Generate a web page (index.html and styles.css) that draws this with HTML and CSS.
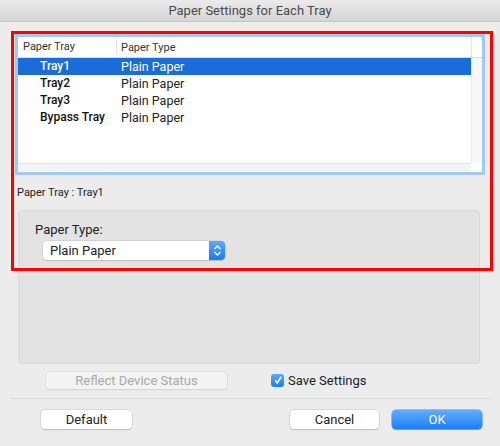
FILE: index.html
```html
<!DOCTYPE html>
<html lang="en">

<head>
    <meta charset="UTF-8">
    <meta name="viewport" content="width=device-width, initial-scale=1.0">
    <title>Paper Settings for Each Tray</title>

    <link rel="stylesheet" href="styles.css">
</head>

<body>
    <div class="window">
        <div class="titlebar">Paper Settings for Each Tray</div>

        <div class="content">
            <!-- tray list -->
            <div class="list">
                <div class="list-head">
                    <div class="col-tray">Paper Tray</div>
                    <div class="col-type">Paper Type</div>
                    <div class="col-end"></div>
                </div>
                <div class="list-body">
                    <ul class="rows">
                        <li class="active"><span class="col-tray">Tray1</span><span class="col-type">Plain Paper</span></li>
                        <li><span class="col-tray">Tray2</span><span class="col-type">Plain Paper</span></li>
                        <li><span class="col-tray">Tray3</span><span class="col-type">Plain Paper</span></li>
                        <li><span class="col-tray">Bypass Tray</span><span class="col-type">Plain Paper</span></li>
                    </ul>
                    <div class="vtrack"></div>
                </div>
                <div class="hscroll">
                    <div class="htrack"></div>
                    <div class="corner"></div>
                </div>
            </div>

            <div class="current">Paper Tray : Tray1</div>

            <div class="group">
                <div class="group-label">Paper Type:</div>
                <div class="popup">
                    <span class="popup-text">Plain Paper</span>
                    <span class="popup-arrows">
                        <svg width="9" height="13" viewBox="0 0 9 13">
                            <path d="M1.5 5 L4.5 2 L7.5 5 M1.5 8 L4.5 11 L7.5 8" fill="none" stroke="#fff" stroke-width="1.4" />
                        </svg>
                    </span>
                </div>
            </div>

            <div class="options">
                <button class="btn btn-disabled reflect">Reflect Device Status</button>
                <label class="check">
                    <span class="box">
                        <svg width="10" height="10" viewBox="0 0 10 10">
                            <path d="M2 5.2 L4.2 7.8 L8.2 1.8" fill="none" stroke="#fff" stroke-width="1.6" />
                        </svg>
                    </span>
                    Save Settings
                </label>
            </div>

            <div class="sep"></div>

            <div class="footer">
                <button class="btn default">Default</button>
                <button class="btn cancel">Cancel</button>
                <button class="btn btn-primary ok">OK</button>
            </div>
        </div>

        <!-- highlight frame over the list area -->
        <div class="mark"></div>
    </div>
</body>

</html>
```

FILE: styles.css
```css
* {
    margin: 0;
    padding: 0;
    box-sizing: border-box;
    list-style: none;
}

body {
    width: 500px;
    height: 446px;
    background: #ececec;
    font-family: Roboto, "Liberation Sans", sans-serif;
    color: #222;
    overflow: hidden;
}

.window {
    position: relative;
    height: 446px;
    display: flex;
    flex-direction: column;
}

.titlebar {
    height: 22px;
    line-height: 21px;
    text-align: center;
    font-size: 13px;
    color: #4a4a4a;
    background: linear-gradient(#ebebeb, #d6d6d6);
    border-bottom: 1px solid #c4c4c4;
}

.content {
    padding: 12px 11px 0;
    display: flex;
    flex-direction: column;
}

/* list */
.list {
    margin: 0 4px;
    height: 141px;
    border: 3px solid #a3c8f2;
    background: #fff;
    display: flex;
    flex-direction: column;
}

.list-head {
    height: 21px;
    display: flex;
    align-items: center;
    border-bottom: 1px solid #d9d9d9;
    font-size: 11px;
    color: #333;
}

.list-head .col-tray {
    width: 99px;
    padding-left: 5px;
    border-right: 1px solid #e2e2e2;
    line-height: 16px;
}

.list-head .col-type {
    flex: 1;
    padding-left: 4px;
}

.list-head .col-end {
    width: 11px;
    height: 20px;
    border-left: 1px solid #e6e6e6;
}

.list-body {
    flex: 1;
    display: flex;
}

.rows {
    flex: 1;
}

.rows li {
    height: 17px;
    line-height: 17px;
    display: flex;
}

.rows li.active {
    background: #1b6cd9;
    color: #fff;
}

.rows .col-tray {
    width: 99px;
    padding-left: 22px;
    font-size: 12px;
    font-weight: 500;
    color: #111;
}

.rows li.active .col-tray {
    color: #fff;
}

.rows .col-type {
    padding-left: 4px;
    font-size: 12.5px;
}

.vtrack {
    width: 11px;
    background: #f7f7f7;
    border-left: 1px solid #ebebeb;
}

.hscroll {
    height: 9px;
    display: flex;
}

.htrack {
    flex: 1;
    background: #f4f4f4;
    border-top: 1px solid #e4e4e4;
}

.corner {
    width: 11px;
    background: #fff;
}

.current {
    margin: 11px 0 0 6px;
    font-size: 11px;
    line-height: 14px;
    color: #222;
}

/* paper type group */
.group {
    margin: 10px 9px 0 7px;
    height: 154px;
    background: #e3e3e3;
    border: 1px solid #dadada;
    border-radius: 4px;
    padding: 11px 0 0 16px;
}

.group-label {
    font-size: 13px;
    line-height: 16px;
}

.popup {
    margin: 3px 0 0 8px;
    width: 182px;
    height: 19px;
    display: flex;
    background: #fff;
    border-radius: 4px;
    box-shadow: 0 0 0 0.5px #c6c6c6, 0 1px 1px #bdbdbd;
}

.popup-text {
    flex: 1;
    padding-left: 7px;
    font-size: 13px;
    line-height: 19px;
}

.popup-arrows {
    width: 16px;
    display: flex;
    align-items: center;
    justify-content: center;
    background: linear-gradient(#5aa9fb, #1c7cf2);
    border-radius: 0 4px 4px 0;
}

/* buttons */
.btn {
    font-family: inherit;
    font-size: 13px;
    height: 19px;
    background: #fff;
    border: none;
    border-radius: 4px;
    box-shadow: 0 0 0 0.5px #c4c4c4, 0 1px 1px #b8b8b8;
    color: #222;
}

.btn-disabled {
    background: #f3f3f3;
    color: #a9a9a9;
    box-shadow: 0 0 0 0.5px #d6d6d6, 0 1px 1px #d2d2d2;
}

.btn-primary {
    background: linear-gradient(#63acfb, #1b7ef5);
    color: #fff;
    box-shadow: 0 0 0 0.5px #3b8cf2, 0 1px 1px #8fb4e0;
}

.options {
    margin-top: 7px;
    height: 18px;
    display: flex;
    align-items: center;
}

.reflect {
    margin-left: 35px;
    width: 181px;
    height: 17px;
}

.check {
    margin-left: 44px;
    display: flex;
    align-items: center;
    font-size: 13px;
}

.box {
    width: 13px;
    height: 13px;
    margin-right: 4px;
    border-radius: 3px;
    background: linear-gradient(#5aa9fb, #1c7cf2);
    display: flex;
    align-items: center;
    justify-content: center;
}

.sep {
    margin-top: 9px;
    height: 1px;
    background: #d8d8d8;
}

.footer {
    margin-top: 11px;
    display: flex;
}

.default {
    margin-left: 30px;
    width: 91px;
}

.cancel {
    margin-left: auto;
    width: 89px;
}

.ok {
    margin: 0 7px 0 13px;
    width: 90px;
}

/* red frame drawn over the list */
.mark {
    position: absolute;
    left: 11px;
    top: 31px;
    width: 482px;
    height: 240px;
    border: 3px solid #f00;
}
```
